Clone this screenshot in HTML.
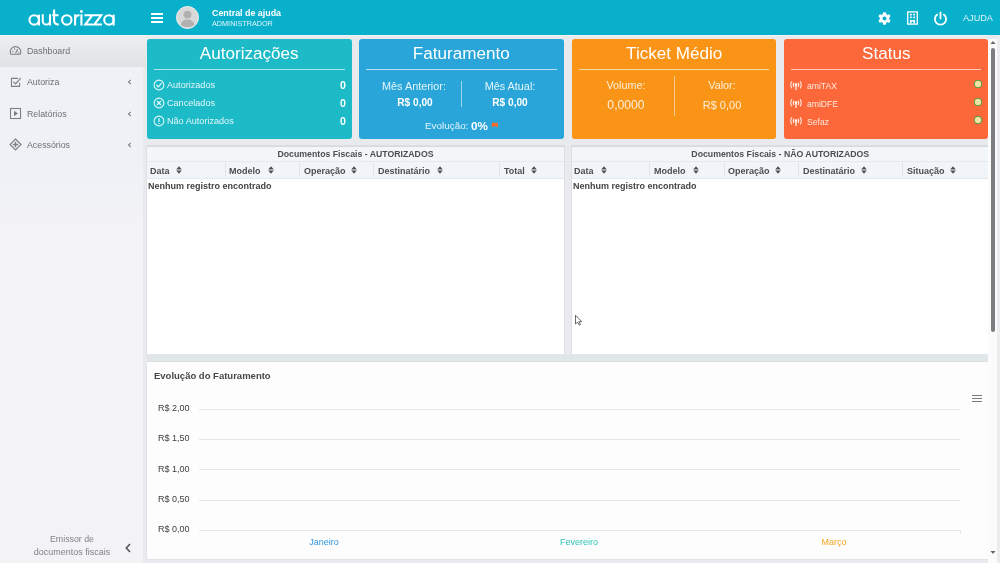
<!DOCTYPE html>
<html><head><meta charset="utf-8"><style>
html,body{margin:0;padding:0;}
body{width:1000px;height:563px;overflow:hidden;position:relative;font-family:"Liberation Sans", sans-serif;}
.t{position:absolute;line-height:1;white-space:nowrap;will-change:transform;}
.r{position:absolute;display:block;}
</style></head><body>
<div class="r" style="left:0px;top:0px;width:1000px;height:563px;background:#e8eaed;"></div>
<div class="r" style="left:0px;top:0px;width:1000px;height:35px;background:#08b0cc;"></div>
<div class="r" style="left:0px;top:35px;width:143px;height:528px;background:linear-gradient(#eef1f6 0px, #eff1f6 130px, #f3f3f6 190px, #f3f3f5 100%);"></div>
<div class="r" style="left:0px;top:35px;width:146px;height:32px;background:linear-gradient(#eeeff0,#e0e1e4);"></div>
<div class="r" style="left:0px;top:35px;width:988px;height:1px;background:#f2f3f5;"></div>
<svg class="r" style="left:0px;top:0px;" width="140" height="35" viewBox="0 0 140 35"><g fill="none" stroke="#fff" stroke-width="2.1"><circle cx="34.2" cy="19.9" r="4.7"/><path d="M38.95 14.6 V25.5"/><path d="M42.75 14.3 V20.9 A3.62 3.62 0 0 0 50 20.9 M50 14.3 V25.5"/><path d="M54.1 9.5 V20.5 Q54.1 24.5 58.8 24.5 M52.2 15.3 H58.6"/><circle cx="66.8" cy="19.9" r="4.7"/><path d="M75.1 14.3 V25.5 M75.1 19.8 Q75.1 15.3 79.6 15.3"/><path d="M81.4 14.3 V25.5"/><path d="M84.4 15.3 H92.2 L85.3 24.5 H93 M92.6 15.3 H101.2 L94.3 24.5 H102"/><circle cx="108.9" cy="19.9" r="4.7"/><path d="M113.6 14.6 V25.5"/></g><circle cx="81.4" cy="11.5" r="1.4" fill="#fff"/></svg>
<div class="r" style="left:151px;top:12.8px;width:12px;height:1.8px;background:#ffffff;"></div>
<div class="r" style="left:151px;top:17.1px;width:12px;height:1.8px;background:#ffffff;"></div>
<div class="r" style="left:151px;top:21.4px;width:12px;height:1.8px;background:#ffffff;"></div>
<svg class="r" style="left:176px;top:6px;" width="23" height="23" viewBox="0 0 23 23"><circle cx="11.5" cy="11.5" r="11" fill="#d9d9d9" stroke="#eeeeee" stroke-width="1"/><circle cx="11.5" cy="8.6" r="3.9" fill="#b0b0b0"/><path d="M4.6 19.2 Q5.5 13.6 11.5 13.6 Q17.5 13.6 18.4 19.2 Q11.5 23.5 4.6 19.2Z" fill="#b0b0b0"/></svg>
<div class="t" style="left:212.30px;top:8.67px;font-size:8.9px;color:#ffffff;font-weight:bold;">Central de ajuda</div>
<div class="t" style="left:212.30px;top:20.06px;font-size:7.25px;color:#e2f5f9;font-weight:normal;">ADMINISTRADOR</div>
<svg class="r" style="left:878px;top:11.8px;" width="13" height="13" viewBox="0 0 13 13"><g fill="#fff"><circle cx="6.5" cy="6.5" r="4.7"/><rect x="4.9" y="0.2" width="3.2" height="12.6" rx="1" transform="rotate(0 6.5 6.5)"/><rect x="4.9" y="0.2" width="3.2" height="12.6" rx="1" transform="rotate(60 6.5 6.5)"/><rect x="4.9" y="0.2" width="3.2" height="12.6" rx="1" transform="rotate(120 6.5 6.5)"/></g><circle cx="6.5" cy="6.5" r="2" fill="#08b0cc"/></svg>
<svg class="r" style="left:906px;top:11px;" width="13" height="14" viewBox="0 0 13 14"><rect x="1.7" y="0.9" width="9.6" height="12.2" fill="none" stroke="#fff" stroke-width="1.3"/><g fill="#fff"><rect x="4" y="2.8" width="1.8" height="1.6"/><rect x="7.2" y="2.8" width="1.8" height="1.6"/><rect x="4" y="5.6" width="1.8" height="1.6"/><rect x="7.2" y="5.6" width="1.8" height="1.6"/><path d="M4 12.5 V9 H9 V12.5 H7.5 V10.5 H5.5 V12.5Z"/></g></svg>
<svg class="r" style="left:933px;top:11px;" width="15" height="15" viewBox="0 0 15 15"><path d="M4.2 3.6 A5.6 5.6 0 1 0 10.8 3.6" fill="none" stroke="#fff" stroke-width="1.8" stroke-linecap="round"/><line x1="7.5" y1="1.5" x2="7.5" y2="7.5" stroke="#fff" stroke-width="1.8" stroke-linecap="round"/></svg>
<div class="t" style="left:962.60px;top:13.75px;font-size:9.15px;color:#e0f6fa;font-weight:normal;">AJUDA</div>
<div class="t" style="left:26.50px;top:46.85px;font-size:8.8px;color:#6c6f74;font-weight:normal;">Dashboard</div>
<div class="t" style="left:26.50px;top:78.05px;font-size:8.8px;color:#6c6f74;font-weight:normal;">Autoriza</div>
<div class="t" style="left:26.50px;top:109.55px;font-size:8.8px;color:#6c6f74;font-weight:normal;">Relatórios</div>
<div class="t" style="left:26.50px;top:140.85px;font-size:8.8px;color:#6c6f74;font-weight:normal;">Acessórios</div>
<svg class="r" style="left:9px;top:45px;" width="14" height="11" viewBox="0 0 14 11"><path d="M1.9 9.2 A5.2 5.2 0 1 1 11.1 9.2 Z" fill="none" stroke="#7c7f84" stroke-width="1.1"/><line x1="6.5" y1="8.3" x2="8.8" y2="4.2" stroke="#7c7f84" stroke-width="1.2"/><circle cx="3.8" cy="6.5" r="0.65" fill="#7c7f84"/><circle cx="5.6" cy="4" r="0.65" fill="#7c7f84"/><circle cx="9.6" cy="7.8" r="0.6" fill="#7c7f84"/></svg>
<svg class="r" style="left:10px;top:76px;" width="12" height="12" viewBox="0 0 12 12"><path d="M8.2 2.4 H1.5 V10.4 H9.6 V6.8" fill="none" stroke="#7c7f84" stroke-width="1.1"/><path d="M3.4 5.6 L5.5 7.8 L10.8 2.2" fill="none" stroke="#7c7f84" stroke-width="1.2"/></svg>
<svg class="r" style="left:9px;top:107px;" width="13" height="13" viewBox="0 0 13 13"><rect x="1.5" y="1.5" width="10" height="10" fill="none" stroke="#7c7f84" stroke-width="1.1"/><path d="M5 3.8 L9 6.5 L5 9.2Z" fill="#7c7f84"/></svg>
<svg class="r" style="left:9px;top:138px;" width="13" height="13" viewBox="0 0 13 13"><path d="M6.5 1 L12 6.5 L6.5 12 L1 6.5Z" fill="none" stroke="#7c7f84" stroke-width="1.1"/><path d="M6.5 3.8 V9.2 M3.8 6.5 H9.2" stroke="#7c7f84" stroke-width="1.4"/></svg>
<svg class="r" style="left:126px;top:78px;" width="7" height="8" viewBox="0 0 7 8"><path d="M4.8 1.8 L2.5 4 L4.8 6.2" fill="none" stroke="#7d8085" stroke-width="1.1"/></svg>
<svg class="r" style="left:126px;top:109.5px;" width="7" height="8" viewBox="0 0 7 8"><path d="M4.8 1.8 L2.5 4 L4.8 6.2" fill="none" stroke="#7d8085" stroke-width="1.1"/></svg>
<svg class="r" style="left:126px;top:140.8px;" width="7" height="8" viewBox="0 0 7 8"><path d="M4.8 1.8 L2.5 4 L4.8 6.2" fill="none" stroke="#7d8085" stroke-width="1.1"/></svg>
<div class="t" style="left:2.00px;width:140px;text-align:center;top:535.05px;font-size:8.8px;color:#808388;font-weight:normal;">Emissor de</div>
<div class="t" style="left:2.00px;width:140px;text-align:center;top:548.41px;font-size:8.97px;color:#808388;font-weight:normal;">documentos fiscais</div>
<svg class="r" style="left:124px;top:543px;" width="8" height="10" viewBox="0 0 8 10"><path d="M6 1 L2.3 5 L6 9" fill="none" stroke="#555" stroke-width="1.6"/></svg>
<div class="r" style="left:147px;top:39px;width:204.5px;height:100px;background:#1cbbc7;border-radius:3px;"></div>
<div class="t" style="left:147.00px;width:204.5px;text-align:center;top:45.42px;font-size:17.1px;color:#ffffff;font-weight:normal;">Autorizações</div>
<div class="r" style="left:154px;top:69px;width:190.5px;height:1px;background:rgba(255,255,255,0.65);"></div>
<div class="r" style="left:359.3px;top:39px;width:204.5px;height:100px;background:#29a5da;border-radius:3px;"></div>
<div class="t" style="left:359.30px;width:204.5px;text-align:center;top:45.42px;font-size:17.1px;color:#ffffff;font-weight:normal;">Faturamento</div>
<div class="r" style="left:366.3px;top:69px;width:190.5px;height:1px;background:rgba(255,255,255,0.65);"></div>
<div class="r" style="left:571.5px;top:39px;width:204.5px;height:100px;background:#fa9417;border-radius:3px;"></div>
<div class="t" style="left:571.50px;width:204.5px;text-align:center;top:45.42px;font-size:17.1px;color:#ffffff;font-weight:normal;">Ticket Médio</div>
<div class="r" style="left:578.5px;top:69px;width:190.5px;height:1px;background:rgba(255,255,255,0.65);"></div>
<div class="r" style="left:783.8px;top:39px;width:204.5px;height:100px;background:#fc6839;border-radius:3px;"></div>
<div class="t" style="left:783.80px;width:204.5px;text-align:center;top:45.42px;font-size:17.1px;color:#ffffff;font-weight:normal;">Status</div>
<div class="r" style="left:790.8px;top:69px;width:190.5px;height:1px;background:rgba(255,255,255,0.65);"></div>
<div class="t" style="left:167.40px;top:81.10px;font-size:9.1px;color:#e3f6fa;font-weight:normal;">Autorizados</div>
<div class="t" style="left:325.60px;width:20px;text-align:right;top:79.83px;font-size:10.6px;color:#ffffff;font-weight:bold;">0</div>
<svg class="r" style="left:153px;top:78.8px;" width="12" height="12" viewBox="0 0 12 12"><circle cx="6" cy="6" r="4.9" fill="none" stroke="#e8fbfc" stroke-width="1.05"/><path d="M3.5 6 L5.3 7.9 L8.6 4.2" fill="none" stroke="#e8fbfc" stroke-width="1.2"/></svg>
<div class="t" style="left:167.40px;top:99.10px;font-size:9.1px;color:#e3f6fa;font-weight:normal;">Cancelados</div>
<div class="t" style="left:325.60px;width:20px;text-align:right;top:97.83px;font-size:10.6px;color:#ffffff;font-weight:bold;">0</div>
<svg class="r" style="left:153px;top:97.1px;" width="12" height="12" viewBox="0 0 12 12"><circle cx="6" cy="6" r="4.9" fill="none" stroke="#e8fbfc" stroke-width="1.05"/><path d="M4 4 L8 8 M8 4 L4 8" fill="none" stroke="#e8fbfc" stroke-width="1.15"/></svg>
<div class="t" style="left:167.40px;top:117.10px;font-size:9.1px;color:#e3f6fa;font-weight:normal;">Não Autorizados</div>
<div class="t" style="left:325.60px;width:20px;text-align:right;top:115.83px;font-size:10.6px;color:#ffffff;font-weight:bold;">0</div>
<svg class="r" style="left:153px;top:115.4px;" width="12" height="12" viewBox="0 0 12 12"><circle cx="6" cy="6" r="4.9" fill="none" stroke="#e8fbfc" stroke-width="1.05"/><path d="M6 3.2 V6.9 M6 7.9 V9" fill="none" stroke="#e8fbfc" stroke-width="1.2"/></svg>
<div class="t" style="left:364.00px;width:100px;text-align:center;top:81.32px;font-size:10.85px;color:#e3f6fa;font-weight:normal;">Mês Anterior:</div>
<div class="t" style="left:364.50px;width:100px;text-align:center;top:97.75px;font-size:10.1px;color:#ffffff;font-weight:bold;">R$ 0,00</div>
<div class="t" style="left:460.00px;width:100px;text-align:center;top:81.32px;font-size:10.85px;color:#e3f6fa;font-weight:normal;">Mês Atual:</div>
<div class="t" style="left:460.00px;width:100px;text-align:center;top:97.75px;font-size:10.1px;color:#ffffff;font-weight:bold;">R$ 0,00</div>
<div class="r" style="left:461px;top:81px;width:1px;height:26px;background:rgba(255,255,255,0.55);"></div>
<div class="t" style="left:424.60px;top:121.32px;font-size:9.9px;color:#e3f6fa;font-weight:normal;">Evolução:</div>
<div class="t" style="left:470.80px;top:120.40px;font-size:11.7px;color:#ffffff;font-weight:bold;">0%</div>
<svg class="r" style="left:491px;top:122px;" width="8" height="7" viewBox="0 0 8 7"><path d="M0.8 0.8 H6.8 V5.8 L4.8 4.2 H2.5 L0.8 5.8Z" fill="#ff6a2c"/></svg>
<div class="t" style="left:576.00px;width:100px;text-align:center;top:80.16px;font-size:10.8px;color:#fdefd9;font-weight:normal;">Volume:</div>
<div class="t" style="left:576.00px;width:100px;text-align:center;top:99.07px;font-size:12.2px;color:#fdefd9;font-weight:normal;">0,0000</div>
<div class="t" style="left:672.00px;width:100px;text-align:center;top:80.16px;font-size:10.8px;color:#fdefd9;font-weight:normal;">Valor:</div>
<div class="t" style="left:672.00px;width:100px;text-align:center;top:100.09px;font-size:11.0px;color:#fdefd9;font-weight:normal;">R$ 0,00</div>
<div class="r" style="left:673.5px;top:76px;width:1px;height:40px;background:rgba(255,255,255,0.5);"></div>
<div class="t" style="left:807.00px;top:82.02px;font-size:8.6px;color:#fde8dc;font-weight:normal;">amiTAX</div>
<svg class="r" style="left:789px;top:80.2px;" width="14" height="11" viewBox="0 0 14 11"><g fill="none" stroke="#fde8dc" stroke-width="1.15"><path d="M2.9 1.2 Q0.6 4.8 2.9 8.4"/><path d="M4.9 2.6 Q3.7 4.8 4.9 7"/><path d="M11.1 1.2 Q13.4 4.8 11.1 8.4"/><path d="M9.1 2.6 Q10.3 4.8 9.1 7"/></g><circle cx="7" cy="4.6" r="1.3" fill="#fff"/><path d="M7 5.2 V10" stroke="#fff" stroke-width="1.2"/></svg>
<svg class="r" style="left:973px;top:79.0px;" width="10" height="10" viewBox="0 0 10 10"><circle cx="5" cy="5" r="3.8" fill="#f8e3a6" stroke="#4f9a3c" stroke-width="1"/></svg>
<div class="t" style="left:807.00px;top:100.02px;font-size:8.6px;color:#fde8dc;font-weight:normal;">amiDFE</div>
<svg class="r" style="left:789px;top:98.2px;" width="14" height="11" viewBox="0 0 14 11"><g fill="none" stroke="#fde8dc" stroke-width="1.15"><path d="M2.9 1.2 Q0.6 4.8 2.9 8.4"/><path d="M4.9 2.6 Q3.7 4.8 4.9 7"/><path d="M11.1 1.2 Q13.4 4.8 11.1 8.4"/><path d="M9.1 2.6 Q10.3 4.8 9.1 7"/></g><circle cx="7" cy="4.6" r="1.3" fill="#fff"/><path d="M7 5.2 V10" stroke="#fff" stroke-width="1.2"/></svg>
<svg class="r" style="left:973px;top:97.1px;" width="10" height="10" viewBox="0 0 10 10"><circle cx="5" cy="5" r="3.8" fill="#f8e3a6" stroke="#4f9a3c" stroke-width="1"/></svg>
<div class="t" style="left:807.00px;top:118.02px;font-size:8.6px;color:#fde8dc;font-weight:normal;">Sefaz</div>
<svg class="r" style="left:789px;top:116.2px;" width="14" height="11" viewBox="0 0 14 11"><g fill="none" stroke="#fde8dc" stroke-width="1.15"><path d="M2.9 1.2 Q0.6 4.8 2.9 8.4"/><path d="M4.9 2.6 Q3.7 4.8 4.9 7"/><path d="M11.1 1.2 Q13.4 4.8 11.1 8.4"/><path d="M9.1 2.6 Q10.3 4.8 9.1 7"/></g><circle cx="7" cy="4.6" r="1.3" fill="#fff"/><path d="M7 5.2 V10" stroke="#fff" stroke-width="1.2"/></svg>
<svg class="r" style="left:973px;top:115.2px;" width="10" height="10" viewBox="0 0 10 10"><circle cx="5" cy="5" r="3.8" fill="#f8e3a6" stroke="#4f9a3c" stroke-width="1"/></svg>
<div class="r" style="left:147px;top:146px;width:417px;height:208px;background:#ffffff;box-shadow:0 0 0 0.6px #d6d9dd;"></div>
<div class="r" style="left:147px;top:146px;width:417px;height:1px;background:#d6d9dd;"></div>
<div class="r" style="left:147px;top:147px;width:417px;height:14px;background:#f3f6f9;"></div>
<div class="r" style="left:147px;top:160.5px;width:417px;height:1px;background:#e5e8ec;"></div>
<div class="r" style="left:147px;top:161.5px;width:417px;height:16.5px;background:#f1f4f8;"></div>
<div class="r" style="left:147px;top:177.5px;width:417px;height:1px;background:#e5e8ec;"></div>
<div class="t" style="left:147.00px;width:417px;text-align:center;top:150.02px;font-size:8.72px;color:#4e4e4e;font-weight:bold;">Documentos Fiscais - AUTORIZADOS</div>
<div class="r" style="left:224.5px;top:163px;width:1px;height:14px;background:#e2e5e8;"></div>
<div class="r" style="left:299px;top:163px;width:1px;height:14px;background:#e2e5e8;"></div>
<div class="r" style="left:373px;top:163px;width:1px;height:14px;background:#e2e5e8;"></div>
<div class="r" style="left:498.6px;top:163px;width:1px;height:14px;background:#e2e5e8;"></div>
<div class="t" style="left:149.60px;top:166.58px;font-size:9.0px;color:#4e4e4e;font-weight:bold;">Data</div>
<svg class="r" style="left:176px;top:166px;" width="6" height="8" viewBox="0 0 6 8"><path d="M0.2 3.5 L3 0.2 L5.8 3.5Z M0.2 4.5 L3 7.8 L5.8 4.5Z" fill="#505050"/></svg>
<div class="t" style="left:229.00px;top:166.58px;font-size:9.0px;color:#4e4e4e;font-weight:bold;">Modelo</div>
<svg class="r" style="left:268px;top:166px;" width="6" height="8" viewBox="0 0 6 8"><path d="M0.2 3.5 L3 0.2 L5.8 3.5Z M0.2 4.5 L3 7.8 L5.8 4.5Z" fill="#505050"/></svg>
<div class="t" style="left:303.60px;top:166.58px;font-size:9.0px;color:#4e4e4e;font-weight:bold;">Operação</div>
<svg class="r" style="left:350.5px;top:166px;" width="6" height="8" viewBox="0 0 6 8"><path d="M0.2 3.5 L3 0.2 L5.8 3.5Z M0.2 4.5 L3 7.8 L5.8 4.5Z" fill="#505050"/></svg>
<div class="t" style="left:378.30px;top:166.58px;font-size:9.0px;color:#4e4e4e;font-weight:bold;">Destinatário</div>
<svg class="r" style="left:437px;top:166px;" width="6" height="8" viewBox="0 0 6 8"><path d="M0.2 3.5 L3 0.2 L5.8 3.5Z M0.2 4.5 L3 7.8 L5.8 4.5Z" fill="#505050"/></svg>
<div class="t" style="left:503.70px;top:166.58px;font-size:9.0px;color:#4e4e4e;font-weight:bold;">Total</div>
<svg class="r" style="left:531px;top:166px;" width="6" height="8" viewBox="0 0 6 8"><path d="M0.2 3.5 L3 0.2 L5.8 3.5Z M0.2 4.5 L3 7.8 L5.8 4.5Z" fill="#505050"/></svg>
<div class="t" style="left:148.00px;top:181.88px;font-size:9.0px;color:#444;font-weight:bold;">Nenhum registro encontrado</div>
<div class="r" style="left:571.5px;top:146px;width:416.5px;height:208px;background:#ffffff;box-shadow:0 0 0 0.6px #d6d9dd;"></div>
<div class="r" style="left:571.5px;top:146px;width:416.5px;height:1px;background:#d6d9dd;"></div>
<div class="r" style="left:571.5px;top:147px;width:416.5px;height:14px;background:#f3f6f9;"></div>
<div class="r" style="left:571.5px;top:160.5px;width:416.5px;height:1px;background:#e5e8ec;"></div>
<div class="r" style="left:571.5px;top:161.5px;width:416.5px;height:16.5px;background:#f1f4f8;"></div>
<div class="r" style="left:571.5px;top:177.5px;width:416.5px;height:1px;background:#e5e8ec;"></div>
<div class="t" style="left:571.50px;width:416.5px;text-align:center;top:150.02px;font-size:8.72px;color:#4e4e4e;font-weight:bold;">Documentos Fiscais - NÃO AUTORIZADOS</div>
<div class="r" style="left:649px;top:163px;width:1px;height:14px;background:#e2e5e8;"></div>
<div class="r" style="left:723.6px;top:163px;width:1px;height:14px;background:#e2e5e8;"></div>
<div class="r" style="left:798.4px;top:163px;width:1px;height:14px;background:#e2e5e8;"></div>
<div class="r" style="left:901.5px;top:163px;width:1px;height:14px;background:#e2e5e8;"></div>
<div class="t" style="left:574.20px;top:166.58px;font-size:9.0px;color:#4e4e4e;font-weight:bold;">Data</div>
<svg class="r" style="left:600.5px;top:166px;" width="6" height="8" viewBox="0 0 6 8"><path d="M0.2 3.5 L3 0.2 L5.8 3.5Z M0.2 4.5 L3 7.8 L5.8 4.5Z" fill="#505050"/></svg>
<div class="t" style="left:653.60px;top:166.58px;font-size:9.0px;color:#4e4e4e;font-weight:bold;">Modelo</div>
<svg class="r" style="left:692.5px;top:166px;" width="6" height="8" viewBox="0 0 6 8"><path d="M0.2 3.5 L3 0.2 L5.8 3.5Z M0.2 4.5 L3 7.8 L5.8 4.5Z" fill="#505050"/></svg>
<div class="t" style="left:728.00px;top:166.58px;font-size:9.0px;color:#4e4e4e;font-weight:bold;">Operação</div>
<svg class="r" style="left:774.8px;top:166px;" width="6" height="8" viewBox="0 0 6 8"><path d="M0.2 3.5 L3 0.2 L5.8 3.5Z M0.2 4.5 L3 7.8 L5.8 4.5Z" fill="#505050"/></svg>
<div class="t" style="left:803.00px;top:166.58px;font-size:9.0px;color:#4e4e4e;font-weight:bold;">Destinatário</div>
<svg class="r" style="left:861px;top:166px;" width="6" height="8" viewBox="0 0 6 8"><path d="M0.2 3.5 L3 0.2 L5.8 3.5Z M0.2 4.5 L3 7.8 L5.8 4.5Z" fill="#505050"/></svg>
<div class="t" style="left:906.80px;top:166.58px;font-size:9.0px;color:#4e4e4e;font-weight:bold;">Situação</div>
<svg class="r" style="left:949.5px;top:166px;" width="6" height="8" viewBox="0 0 6 8"><path d="M0.2 3.5 L3 0.2 L5.8 3.5Z M0.2 4.5 L3 7.8 L5.8 4.5Z" fill="#505050"/></svg>
<div class="t" style="left:572.50px;top:181.88px;font-size:9.0px;color:#444;font-weight:bold;">Nenhum registro encontrado</div>
<div class="r" style="left:147px;top:354px;width:841px;height:8px;background:#e1e6e9;"></div>
<div class="r" style="left:147px;top:361px;width:841px;height:1px;background:#dadee1;"></div>
<div class="r" style="left:147px;top:362px;width:841px;height:196.5px;background:#fdfdfe;box-shadow:0 0 0 0.6px #dde0e3;"></div>
<div class="t" style="left:153.80px;top:371.36px;font-size:9.5px;color:#474747;font-weight:bold;">Evolução do Faturamento</div>
<div class="t" style="left:158.30px;top:403.78px;font-size:9.0px;color:#3d3d3d;font-weight:normal;">R$ 2,00</div>
<div class="r" style="left:199px;top:408.5px;width:761px;height:1px;background:#e6e6e6;"></div>
<div class="t" style="left:158.30px;top:434.18px;font-size:9.0px;color:#3d3d3d;font-weight:normal;">R$ 1,50</div>
<div class="r" style="left:199px;top:438.9px;width:761px;height:1px;background:#e6e6e6;"></div>
<div class="t" style="left:158.30px;top:464.58px;font-size:9.0px;color:#3d3d3d;font-weight:normal;">R$ 1,00</div>
<div class="r" style="left:199px;top:469.3px;width:761px;height:1px;background:#e6e6e6;"></div>
<div class="t" style="left:158.30px;top:494.98px;font-size:9.0px;color:#3d3d3d;font-weight:normal;">R$ 0,50</div>
<div class="r" style="left:199px;top:499.7px;width:761px;height:1px;background:#e6e6e6;"></div>
<div class="t" style="left:158.30px;top:525.38px;font-size:9.0px;color:#3d3d3d;font-weight:normal;">R$ 0,00</div>
<div class="r" style="left:199px;top:530.1px;width:761px;height:1px;background:#e6e6e6;"></div>
<div class="r" style="left:960px;top:529.5px;width:1px;height:4px;background:#e6e6e6;"></div>
<div class="t" style="left:284.00px;width:80px;text-align:center;top:538.38px;font-size:9.0px;color:#3498db;font-weight:normal;">Janeiro</div>
<div class="t" style="left:539.00px;width:80px;text-align:center;top:538.38px;font-size:9.0px;color:#2ec4b6;font-weight:normal;">Fevereiro</div>
<div class="t" style="left:794.00px;width:80px;text-align:center;top:538.38px;font-size:9.0px;color:#f5a623;font-weight:normal;">Março</div>
<div class="r" style="left:972px;top:395px;width:10px;height:1.1px;background:#7a7a7a;"></div>
<div class="r" style="left:972px;top:398.2px;width:10px;height:1.1px;background:#7a7a7a;"></div>
<div class="r" style="left:972px;top:401.4px;width:10px;height:1.1px;background:#7a7a7a;"></div>
<div class="r" style="left:988px;top:39px;width:9px;height:524px;background:#fbfbfc;"></div>
<div class="r" style="left:997px;top:35px;width:3px;height:528px;background:#ececee;"></div>
<div class="r" style="left:990.8px;top:47.5px;width:4.6px;height:284px;background:#7d7d7f;border-radius:2.3px;"></div>
<svg class="r" style="left:989px;top:39px;" width="8" height="7" viewBox="0 0 8 7"><path d="M1.5 5 L4 2 L6.5 5Z" fill="#666"/></svg>
<svg class="r" style="left:989px;top:549px;" width="8" height="7" viewBox="0 0 8 7"><path d="M1.5 2 L4 5 L6.5 2Z" fill="#666"/></svg>
<svg class="r" style="left:574px;top:314px;" width="12" height="14" viewBox="0 0 12 14"><path d="M1.5 1.2 L1.5 10 L3.6 8.2 L5.3 11.2 L6.5 10.6 L4.9 7.6 L7.8 7.6Z" fill="#fff" stroke="#3a3a3a" stroke-width="0.75" stroke-linejoin="round"/></svg>
</body></html>
